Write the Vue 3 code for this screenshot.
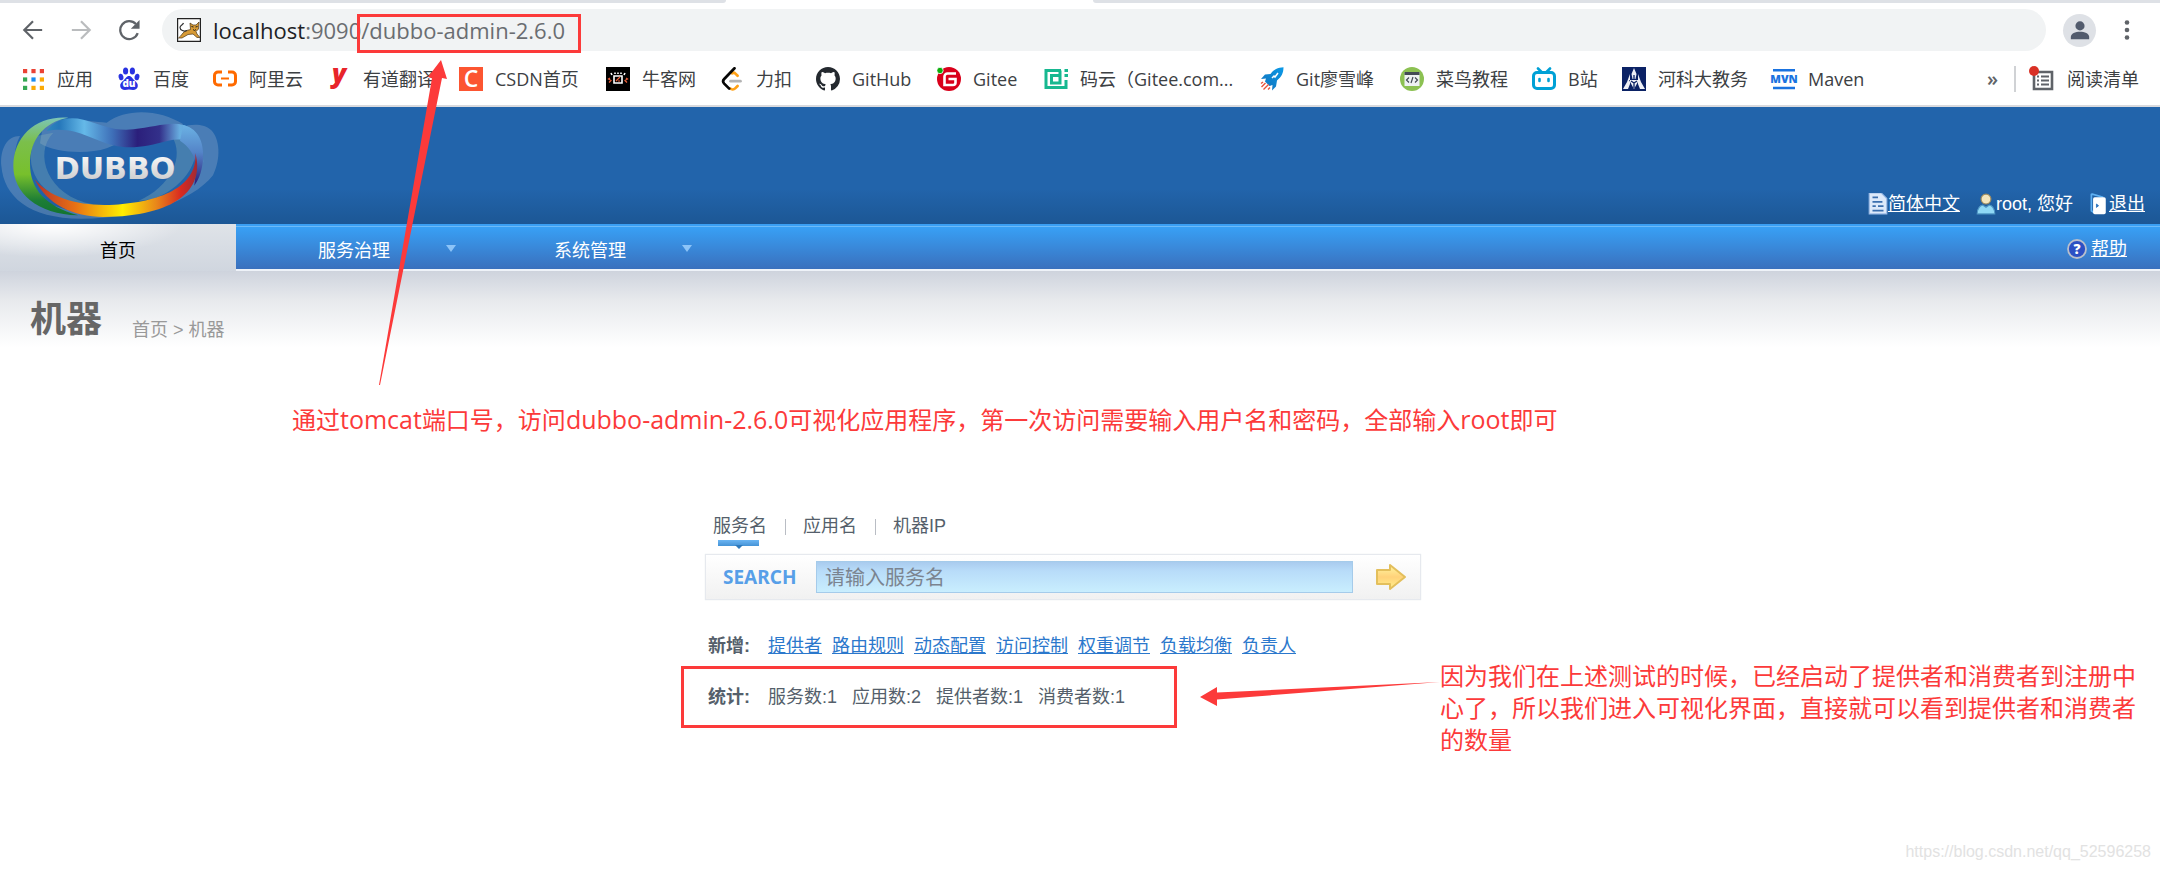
<template>
  <div class="page">
    <svg class="sprite" aria-hidden="true">
      <defs>
        <linearGradient id="rocket-blue" x1="0" y1="1" x2="1" y2="0">
          <stop offset="0" stop-color="#1470b8" />
          <stop offset="1" stop-color="#0b9ae8" />
        </linearGradient>
      </defs>
      <symbol id="i-baidu" viewBox="0 0 24 24">
        <g fill="#2932e1">
          <ellipse cx="8.6" cy="4" rx="2.6" ry="3.6" />
          <ellipse cx="15.4" cy="4" rx="2.6" ry="3.6" />
          <ellipse cx="4" cy="10" rx="2.400" ry="3.200" transform="rotate(-12 4 10)" />
          <ellipse cx="20" cy="10" rx="2.400" ry="3.200" transform="rotate(12 20 10)" />
          <path d="M12 9c-2.600 0-3.400 2.600-5.200 4.200-2.200 1.800-4 3.400-3.600 6 .4 2.600 2.600 3.800 4.800 3.700 1.400-.1 2.600-.4 4-.4s2.600.3 4 .4c2.200.1 4.400-1.100 4.800-3.700.4-2.600-1.400-4.200-3.600-6C15.400 11.600 14.600 9 12 9z" />
        </g>
      </symbol>
      <symbol id="i-aliyun" viewBox="0 0 24 24">
        <path d="M9 5H5a3.500 3.500 0 0 0-3.500 3.500v6A3.500 3.500 0 0 0 5 18h4M15 5h4a3.500 3.500 0 0 1 3.500 3.500v6A3.500 3.500 0 0 1 19 18h-4" fill="none" stroke="#ff6a00" stroke-width="3" />
        <path d="M8 11.500h8" stroke="#ff6a00" stroke-width="2" />
      </symbol>
      <symbol id="i-csdn" viewBox="0 0 24 24">
        <path d="M0 0h24v24H0z" fill="#fc5531" />
      </symbol>
      <symbol id="i-nowcoder" viewBox="0 0 24 24">
        <path d="M0 0h24v24H0z" fill="#000" />
        <path d="M8 9h8v7H8zM5 6l1 2M19 6l-1 2M9 7V5.500M12 7V5.500M15 7V5.500" fill="none" stroke="#fff" stroke-width="1.600" />
        <path d="M4 11l-1.500 1L5 13.500 3 15.500M20 11l1.500 1-2.500 1.500 2 2M10 14l4-4M12 14h2" fill="none" stroke="#f0603a" stroke-width="1.200" />
      </symbol>
      <symbol id="i-leetcode" viewBox="0 0 24 24">
        <g fill="none" stroke-width="2.700" stroke-linecap="round">
          <path d="M17.600 8.800l-2.200-2.200c-1-1-2.400-1-3.400-.3M17.600 19l-2.400 2.400c-1.400 1.400-3.600 1.400-5 0" stroke="#ffa116" />
          <path d="M14.500 1.300L4.200 12c-1.300 1.300-1.300 3.200 0 4.600l5 5" stroke="#070706" />
          <path d="M10.500 14.200h10" stroke="#b3b3b3" />
        </g>
      </symbol>
      <symbol id="i-github" viewBox="0 0 16 16">
        <path fill="#24292f" d="M8 0C3.580 0 0 3.580 0 8c0 3.540 2.290 6.530 5.470 7.590.4.070.55-.17.55-.38 0-.19-.01-.82-.01-1.490-2.010.37-2.530-.49-2.690-.94-.09-.23-.48-.94-.82-1.130-.28-.15-.68-.52-.01-.53.63-.01 1.080.58 1.230.82.72 1.210 1.870.87 2.330.66.07-.52.28-.87.51-1.070-1.780-.2-3.640-.89-3.640-3.950 0-.87.31-1.590.82-2.150-.08-.2-.36-1.020.08-2.120 0 0 .67-.21 2.200.82.64-.18 1.320-.27 2-.27s1.360.09 2 .27c1.530-1.040 2.200-.82 2.200-.82.44 1.100.16 1.920.08 2.120.51.56.82 1.270.82 2.150 0 3.070-1.870 3.750-3.650 3.950.29.25.54.73.54 1.480 0 1.070-.01 1.930-.01 2.200 0 .21.15.46.55.38A8.010 8.010 0 0 0 16 8c0-4.420-3.580-8-8-8z" />
      </symbol>
      <symbol id="i-gitee" viewBox="0 0 24 24">
        <circle cx="12" cy="12" r="12" fill="#d9001b" />
        <path d="M19 6.500h-8.500a3 3 0 0 0-3 3v8.500h8.500a2.500 2.500 0 0 0 2.500-2.500V12h-7" fill="none" stroke="#fff" stroke-width="2.600" />
        <circle cx="3" cy="3.500" r="3.200" fill="#0cae0c" stroke="#fff" stroke-width=".8" />
      </symbol>
      <symbol id="i-mayun" viewBox="0 0 24 24">
        <path d="M17 3.500H2v17h20V13M16 8.500H7.500v7.500H16V3.500" fill="none" stroke="#17b890" stroke-width="3" />
        <path d="M20.500 2H24v3h-3.500zM20.500 7H24v3h-3.500z" fill="#17b890" />
      </symbol>
      <symbol id="i-rocket" viewBox="0 0 24 24">
        <path d="M23.500.3C18 .5 13.500 2.500 10.500 7L5 7.500 1 12l5-.5-1 3 4.500 4.500 3-1L12 23.500l4-4 1-6C21.500 10 23.500 6 23.500.3z" fill="url(#rocket-blue)" />
        <path d="M12 11l2-2 1 1 3-4" fill="none" stroke="#fff" stroke-width="1.500" />
        <path d="M1.500 20l4-4M3.500 22.500l5-5M1 16.500l2-1.500M8 22.500l2-2" stroke="#e8523c" stroke-width="1.400" />
      </symbol>
      <symbol id="i-runoob" viewBox="0 0 24 24">
        <circle cx="12" cy="12" r="12" fill="#8cc152" />
        <path d="M4.500 5h15v14h-15z" fill="#eef1f3" />
        <path d="M4.500 5h15v3h-15z" fill="#434a54" />
        <path d="M9 10.500L6.500 13 9 15.500M15 10.500l2.500 2.500-2.500 2.500M13 10l-2 6" fill="none" stroke="#434a54" stroke-width="1.200" />
      </symbol>
      <symbol id="i-bili" viewBox="0 0 24 24">
        <rect x="1.500" y="5.500" width="21" height="16" rx="3.500" fill="none" stroke="#00a1d6" stroke-width="3" />
        <path d="M6 1.500l3.500 3.500M18 1.500L14.500 5" stroke="#00a1d6" stroke-width="2.600" stroke-linecap="round" />
        <path d="M7.500 12v2M16.500 12v2" stroke="#00a1d6" stroke-width="2.600" stroke-linecap="round" />
      </symbol>
      <symbol id="i-heke" viewBox="0 0 24 24">
        <path d="M0 0h24v24H0z" fill="#0b2265" />
        <path d="M12 1l2.500 6-1 5H10.500l-1-5zM8 7l-3 8-4 7h5l2-5zM16 7l3 8 4 7h-5l-2-5zM7 13h10l-5 9z" fill="#eef0f6" />
        <path d="M12 8v4M9 14l3 2 3-2M12 16v5" stroke="#0b2265" stroke-width="1.300" fill="none" />
      </symbol>
      <symbol id="i-maven" viewBox="0 0 24 24">
        <path d="M1 3.200h22M1 21h22" stroke="#1a73e0" stroke-width="2.600" />
      </symbol>
    </svg>

    <!-- browser chrome -->
    <header class="browser">
      <div class="tabstrip"><i class="left"></i><i class="right"></i></div>
      <div class="toolbar">
        <button class="icon-btn" aria-label="后退">
          <svg viewBox="0 0 24 24"><path d="M22 12H3M12 2.500L2.500 12l9.500 9.500" fill="none" stroke="#5f6368" stroke-width="2.400" /></svg>
        </button>
        <button class="icon-btn" aria-label="前进">
          <svg viewBox="0 0 24 24"><path d="M2 12h19M12 2.500l9.500 9.500-9.500 9.500" fill="none" stroke="#babcbe" stroke-width="2.400" /></svg>
        </button>
        <button class="icon-btn" aria-label="重新加载">
          <svg viewBox="0 0 24 24">
            <path d="M21.500 15.500A9.800 9.800 0 1 1 19.500 5.500" fill="none" stroke="#5f6368" stroke-width="2.500" />
            <path d="M23.500 1v9.500H14z" fill="#5f6368" />
          </svg>
        </button>
        <div class="omnibox">
          <svg class="favicon" viewBox="0 0 24 24">
            <path d="M.6.6h22.800v22.800H.6z" fill="#fff" stroke="#222" stroke-width="1.200" />
            <path d="M1.500 20c3-2 4-6 8-7.500l4-1L13 5l3 2h3l3-3-.5 7-2.500 2.500 1 2.500 3 3.500h-3l-4-3.500-5 .5L5 20z" fill="#d79a35" stroke="#4b3414" stroke-width=".7" />
            <path d="M14.500 8.500l2 .5M20.500 8.500l-2 .5M16 11.500l1.500 1 1.500-1" stroke="#222" fill="none" />
            <path d="M10 12.500C7 14 3 12 3 9.500S6 7 6.500 5" fill="none" stroke="#333" stroke-width="1.200" />
          </svg>
          <span class="url"><b>localhost</b>:9090<span class="path">/dubbo-admin-2.6.0</span></span>
        </div>
        <button class="avatar" aria-label="用户">
          <svg viewBox="0 0 24 24"><circle cx="12" cy="7.500" r="5" fill="#525b6d" /><path d="M2 22v-2.500C2 16 7 14 12 14s10 2 10 5.500V22z" fill="#525b6d" /></svg>
        </button>
        <button class="more" aria-label="菜单">
          <svg viewBox="0 0 6 20"><circle cx="3" cy="2.500" r="2.300" /><circle cx="3" cy="10" r="2.300" /><circle cx="3" cy="17.500" r="2.300" /></svg>
        </button>
      </div>
      <nav class="bookmarks">
        <a href="#" class="apps">
          <svg viewBox="0 0 20 20">
            <rect v-for="(c, i) in appColors" :key="i" :x="(i % 3) * 8" :y="Math.floor(i / 3) * 8" width="4" height="4" :fill="c" />
          </svg>
          应用
        </a>
        <a v-for="b in bookmarks" :key="b.icon" href="#">
          <svg viewBox="0 0 24 24">
            <use v-if="b.icon !== 'youdao'" :href="'#i-' + b.icon" width="24" height="24" />
            <text v-if="b.glyph" x="12" :y="b.y" :class="['ico-text', b.icon]">{{ b.glyph }}</text>
          </svg>
          <span :style="{ minWidth: b.width + 'px' }">{{ b.name }}</span>
        </a>
        <button class="overflow">»</button>
        <a href="#" class="reading">
          <svg viewBox="0 0 26 26">
            <path d="M5 6h18v17H5z" fill="none" stroke="#5f6368" stroke-width="2.600" />
            <path d="M8 10.500h2M8 14.500h2M8 18.500h2M12 10.500h8M12 14.500h8M12 18.500h8" stroke="#5f6368" stroke-width="2" />
            <circle cx="5" cy="5" r="5" fill="#d93025" />
          </svg>
          阅读清单
        </a>
      </nav>
    </header>

    <!-- dubbo admin -->
    <div class="banner">
      <svg class="logo" viewBox="0 3 690 351">
        <defs>
          <linearGradient id="ring-green" x1="0" y1="0" x2="0" y2="1">
            <stop offset="0" stop-color="#7cc5b8" />
            <stop offset=".25" stop-color="#7bbf4b" />
            <stop offset=".58" stop-color="#78c02c" />
            <stop offset=".85" stop-color="#1c7d35" />
            <stop offset="1" stop-color="#12742f" />
          </linearGradient>
          <linearGradient id="ring-blue" x1="0" y1="0" x2="1" y2="0">
            <stop offset="0" stop-color="#2f86bd" />
            <stop offset=".08" stop-color="#2577ba" />
            <stop offset=".24" stop-color="#65b9e8" />
            <stop offset=".42" stop-color="#3e6fb8" />
            <stop offset=".58" stop-color="#2b1f7b" />
            <stop offset=".72" stop-color="#33308a" />
            <stop offset=".85" stop-color="#68aee0" />
            <stop offset="1" stop-color="#5c9fd8" />
          </linearGradient>
          <linearGradient id="ring-side" x1="0" y1="0" x2="0" y2="1">
            <stop offset="0" stop-color="#6bb2e4" />
            <stop offset=".45" stop-color="#5484c8" />
            <stop offset="1" stop-color="#2a1a78" />
          </linearGradient>
          <linearGradient id="ring-fire" x1="0" y1="0" x2="1" y2="0">
            <stop offset="0" stop-color="#b5322a" />
            <stop offset=".25" stop-color="#e87114" />
            <stop offset=".54" stop-color="#ffee00" />
            <stop offset=".75" stop-color="#e8861a" />
            <stop offset=".9" stop-color="#d92a20" />
            <stop offset="1" stop-color="#a02a35" />
          </linearGradient>
          <linearGradient id="metal" x1="0" y1="0" x2="0" y2="1">
            <stop offset="0" stop-color="#fff" />
            <stop offset="1" stop-color="#c4c4c6" />
          </linearGradient>
        </defs>
        <g fill="#9fb3cc" fill-opacity=".32">
          <path d="M60 90C20 90 0 130 4 180c8 90 80 158 240 158 180 0 330-50 395-130 25-50 20-110-5-135-20-20-60-20-85-10 50 20 65 70 55 110-20 70-130 150-300 150C150 320 60 260 45 180c-5-40 5-70 15-90z" />
          <path d="M130 50c80-20 140-2 190 0 60-45 160-40 230 5l-50 30c-100 10-130 20-180 42-60 20-160 12-200-15z" />
          <path d="M160 80c-60 60-20 190 120 215l-30 5C120 280 60 180 110 90zM515 90c40 60 0 150-100 195l40-5c90-30 150-110 130-185z" fill="#8fb9b7" />
        </g>
        <path d="M205 35C110 28 40 90 40 180c0 80 70 145 195 148-100-28-145-80-145-155 0-70 40-125 115-138z" fill="url(#ring-green)" />
        <path d="M140 75c25-35 65-45 110-34 60 16 90 35 150 29 60-6 110-24 150-13 40 12 60 55 60 115-5-60-50-80-105-68-60 15-110 28-165 14-65-15-115-60-200-43z" fill="url(#ring-blue)" />
        <path d="M550 57c50 12 64 60 58 112-4 35-14 55-25 70 8-55 10-100-43-135z" fill="url(#ring-side)" />
        <path d="M104 220c50 60 140 82 240 76 130-8 250-50 242-155 30 110-60 190-276 192C220 333 140 295 104 220z" fill="url(#ring-fire)" />
        <text x="345" y="219" text-anchor="middle" class="logo-text" fill="url(#metal)">DUBBO</text>
      </svg>
      <div class="user-links">
        <a href="#">
          <svg viewBox="0 0 18 20">
            <path d="M1 0h11l5 5v14H1z" fill="#dce9fa" stroke="#9cbbe6" />
            <path d="M4 4h5M4 8h9M4 12h3M9 12h5M4 16h10" stroke="#3b6fae" stroke-width="1.600" />
          </svg><u>简体中文</u>
        </a>
        <span>
          <svg viewBox="0 0 18 20">
            <circle cx="9" cy="5.500" r="4.500" fill="#f3e5bd" stroke="#9b8a5f" />
            <path d="M1 19c0-5 3-8 5-8l3 2 3-2c2 0 5 3 5 8z" fill="#8fd8f5" stroke="#4f96c4" />
          </svg>root, 您好
        </span>
        <a href="#">
          <svg viewBox="0 0 20 26">
            <path d="M1 1l14 4M1 1v20l3 2" stroke="#5fb0f2" stroke-width="2" fill="none" />
            <rect x="3" y="5" width="15" height="20" rx="2" fill="#fff" />
            <path d="M7 13l2.500 2L7 17z" fill="#2b73bd" stroke="#2b73bd" />
          </svg><u>退出</u>
        </a>
      </div>
    </div>

    <nav class="menu">
      <a href="#" class="tab active">首页</a>
      <a v-for="m in menus" :key="m" href="#" class="tab">{{ m }}<i class="caret"></i></a>
      <a href="#" class="help">
        <svg viewBox="0 0 20 20">
          <circle cx="10" cy="10" r="9" fill="#2c50c4" stroke="#b9bfcc" stroke-width="1.800" />
          <text x="10" y="15" class="ico-text" font-size="14" fill="#fff">?</text>
        </svg>
        <u>帮助</u>
      </a>
    </nav>

    <main class="content">
      <div class="heading">
        <h1>机器</h1>
        <span class="crumb">首页 &gt; 机器</span>
      </div>

      <div class="panel">
        <div class="kinds">
          <a v-for="k in kinds" :key="k" href="#" :class="{ on: k === '服务名' }">{{ k }}</a>
        </div>
        <form class="search" @submit.prevent>
          <label for="keyword">SEARCH</label>
          <input id="keyword" v-model="keyword" type="text" placeholder="请输入服务名" />
          <button aria-label="搜索">
            <svg viewBox="0 0 30 26">
              <defs>
                <linearGradient id="go" x1="0" y1="0" x2="0" y2="1">
                  <stop offset="0" stop-color="#fff6a0" />
                  <stop offset=".5" stop-color="#ffd27a" />
                  <stop offset="1" stop-color="#fff08a" />
                </linearGradient>
              </defs>
              <path d="M1 6h13V1l15 12-15 12v-5H1z" fill="url(#go)" stroke="#e3bf5c" stroke-width="2" stroke-linejoin="round" />
            </svg>
          </button>
        </form>
        <div class="row adds">
          <strong>新增:</strong>
          <a v-for="a in adds" :key="a" href="#">{{ a }}</a>
        </div>
        <div class="row stats">
          <strong>统计:</strong>
          <span v-for="s in stats" :key="s.label">{{ s.label }}:{{ s.count }}</span>
          <svg class="stats-arrow" viewBox="0 0 240 28">
            <path d="M0 17L17 7v5.500L240 2 17 19.500V26z" />
          </svg>
          <p class="note stats-note">
            因为我们在上述测试的时候，已经启动了提供者和消费者到注册中心了，所以我们进入可视化界面，直接就可以看到提供者和消费者的数量
          </p>
        </div>
      </div>
    </main>

    <svg class="url-arrow" viewBox="0 0 72 326">
      <path d="M0 325L53 18l-4-1L62 0l6 19-5-1L1 325z" />
    </svg>
    <p class="note url-note">
      通过<span>tomcat</span>端口号，访问<span>dubbo-admin-2.6.0</span>可视化应用程序，第一次访问需要输入用户名和密码，全部输入<span>root</span>即可
    </p>
    <span class="watermark">https://blog.csdn.net/qq_52596258</span>
  </div>
</template>

<script setup>
import { ref } from "vue";

const keyword = ref("");

const appColors = [
  "#ea4335", "#ea4335", "#ea4335",
  "#34a853", "#1a8cf0", "#fbaa05",
  "#34a853", "#fbaa05", "#fbaa05",
];

const bookmarks = [
  { icon: "baidu", name: "百度", width: 36, glyph: "du", y: 20 },
  { icon: "aliyun", name: "阿里云", width: 54 },
  { icon: "youdao", name: "有道翻译", width: 72, glyph: "y", y: 16 },
  { icon: "csdn", name: "CSDN首页", width: 87, glyph: "C", y: 20 },
  { icon: "nowcoder", name: "牛客网", width: 54 },
  { icon: "leetcode", name: "力扣", width: 36 },
  { icon: "github", name: "GitHub", width: 61 },
  { icon: "gitee", name: "Gitee", width: 47 },
  { icon: "mayun", name: "码云（Gitee.com...", width: 156 },
  { icon: "rocket", name: "Git廖雪峰", width: 80 },
  { icon: "runoob", name: "菜鸟教程", width: 72 },
  { icon: "bili", name: "B站", width: 30 },
  { icon: "heke", name: "河科大教务", width: 90 },
  { icon: "maven", name: "Maven", width: 57, glyph: "MVN", y: 16 },
];

const menus = ["服务治理", "系统管理"];
const kinds = ["服务名", "应用名", "机器IP"];
const adds = ["提供者", "路由规则", "动态配置", "访问控制", "权重调节", "负载均衡", "负责人"];
const stats = [
  { label: "服务数", count: 1 },
  { label: "应用数", count: 2 },
  { label: "提供者数", count: 1 },
  { label: "消费者数", count: 1 },
];
</script>

<style>
body {
  margin: 0;
  background: #fff;
}
</style>

<style scoped>
.page {
  position: relative;
  min-height: 100vh;
  overflow: hidden;
  font-family: "Liberation Sans", "Noto Sans CJK SC", sans-serif;
  font-size: 18px;
  line-height: 24px;
}

.sprite {
  position: absolute;
  width: 0;
  height: 0;
}

a {
  color: inherit;
  text-decoration: none;
}

button {
  padding: 0;
  border: 0;
  background: none;
}

svg {
  display: block;
  flex: none;
}

.ico-text {
  font-family: "Open Sans", sans-serif;
  font-weight: 800;
  text-anchor: middle;
}

.ico-text.baidu {
  font-size: 10px;
  fill: #fff;
}

.ico-text.youdao {
  font-size: 26px;
  font-style: italic;
  fill: #e8242a;
}

.ico-text.csdn {
  font-size: 23px;
  font-weight: 600;
  fill: #fff;
}

.ico-text.maven {
  font-size: 11px;
  fill: #1a73e0;
}

/* browser chrome */
.browser {
  font-family: "Open Sans", "Noto Sans CJK SC", sans-serif;
  color: #3c4043;
  border-bottom: 2px solid #d9dade;
}

.tabstrip {
  display: flex;
  justify-content: space-between;
  height: 3px;
}

.tabstrip i {
  background: #dee1e6;
}

.tabstrip .left {
  width: 33.6%;
  border-bottom-right-radius: 6px;
}

.tabstrip .right {
  width: 49.4%;
  border-bottom-left-radius: 6px;
}

.toolbar {
  display: flex;
  align-items: center;
  padding: 6px 30px 0 22px;
}

.icon-btn {
  margin-right: 26px;
}

.icon-btn svg {
  width: 22px;
  height: 22px;
}

.omnibox {
  display: flex;
  flex: 1;
  align-items: center;
  gap: 12px;
  height: 42px;
  margin: 0 17px 0 -4px;
  padding-left: 15px;
  border-radius: 21px;
  background: #f1f3f4;
}

.favicon {
  width: 24px;
  height: 24px;
}

.url {
  font-size: 22px;
  color: #6a6d71;
}

.url b {
  font-weight: 400;
  color: #202124;
}

.path {
  position: relative;
}

.path::after {
  position: absolute;
  inset: -1px -16px -8px -4px;
  border: 3px solid #fc3a3a;
  content: "";
}

.avatar {
  display: grid;
  place-items: center;
  width: 33px;
  height: 33px;
  border-radius: 50%;
  background: #dee1e6;
}

.avatar svg {
  width: 22px;
  height: 22px;
}

.more {
  margin-left: 28px;
}

.more svg {
  width: 6px;
  height: 20px;
  fill: #5f6368;
}

.bookmarks {
  display: flex;
  align-items: center;
  gap: 24px;
  height: 52px;
  padding: 2px 21px 0 23px;
}

.bookmarks a {
  display: flex;
  align-items: center;
  gap: 12px;
  white-space: nowrap;
}

.bookmarks svg {
  width: 24px;
  height: 24px;
  overflow: visible;
}

.bookmarks .apps {
  gap: 13px;
}

.bookmarks .apps svg {
  width: 21px;
  height: 21px;
}

.overflow {
  margin-left: auto;
  margin-right: -8px;
  font: 600 20px/24px "Open Sans", sans-serif;
  color: #5f6368;
}

.bookmarks .reading {
  padding-left: 13px;
  border-left: 2px solid #d0d2d5;
}

.bookmarks .reading svg {
  width: 26px;
  height: 26px;
}

/* banner */
.banner {
  display: flex;
  align-items: flex-end;
  justify-content: space-between;
  height: 117px;
  background: linear-gradient(#2264ab 70%, #1c5795);
}

.logo {
  width: 230px;
  height: 117px;
}

.logo-text {
  font-family: "DejaVu Sans", sans-serif;
  font-size: 90px;
  font-weight: 700;
}

.user-links {
  display: flex;
  gap: 16px;
  padding: 0 15px 8px 0;
  color: #fff;
}

.user-links > * {
  display: flex;
  align-items: center;
}

.user-links svg {
  width: 20px;
  height: 22px;
}

/* menu */
.menu {
  display: flex;
  height: 45px;
  border-bottom: 2px solid #eef2f8;
  background: linear-gradient(#3a9ff3 2px, #6dbaf7 2px, #6dbaf7 3px, #38a0f5 3px, #3a70bd);
  color: #fff;
}

.tab {
  position: relative;
  width: 236px;
  line-height: 54px;
  text-align: center;
}

.tab.active {
  height: 47px;
  background: radial-gradient(ellipse at 22% 0, #fff, transparent 50%), linear-gradient(#dfe3e8, #d0d6df);
  color: #000;
}

.caret {
  position: absolute;
  top: 21px;
  right: 16px;
  border: 5px solid transparent;
  border-top: 7px solid #8cc4f8;
  border-bottom: 0;
}

.help {
  display: flex;
  align-items: center;
  gap: 4px;
  margin-left: auto;
  padding: 4px 33px 0 0;
}

.help svg {
  width: 20px;
  height: 20px;
}

/* content */
.content {
  padding-top: 25px;
  background: linear-gradient(#ced3dd, #e8eaed 30px, #fff 76px);
}

.heading {
  display: flex;
  align-items: flex-end;
  gap: 30px;
  padding-left: 30px;
}

h1 {
  margin: 0;
  font-size: 36px;
  line-height: 48px;
  color: #666;
}

.crumb {
  padding-bottom: 2px;
  color: #999;
}

.panel {
  position: relative;
  left: -17px;
  width: 716px;
  margin: 170px auto 0;
  color: #555f6b;
}

.kinds {
  display: flex;
  padding-left: 8px;
}

.kinds a {
  position: relative;
}

.kinds a + a {
  margin-left: 18px;
  padding-left: 18px;
}

.kinds a + a::before {
  position: absolute;
  top: 5px;
  left: 0;
  height: 16px;
  border-left: 1px solid #b9bdc4;
  content: "";
}

.kinds .on::before {
  position: absolute;
  top: 26px;
  left: 5px;
  width: 41px;
  height: 6px;
  background: linear-gradient(#6bb5f3, #4593d6);
  content: "";
}

.kinds .on::after {
  position: absolute;
  top: 31px;
  left: 22px;
  border: 4px solid transparent;
  border-top-color: #2f7abc;
  border-bottom: 0;
  content: "";
}

.search {
  display: flex;
  align-items: center;
  height: 44px;
  margin-top: 16px;
  border: 1px solid #e6e9ee;
  box-shadow: 0 0 1px #dfe3e8;
  background: linear-gradient(#fff, #f1f1f1);
}

.search label {
  width: 110px;
  box-sizing: border-box;
  padding-left: 17px;
  font: 700 19px/24px "Noto Sans", sans-serif;
  color: #579fe8;
}

.search input {
  flex: 1;
  box-sizing: border-box;
  height: 32px;
  padding: 2px 8px 0;
  border: 1px solid #a5cbea;
  background: linear-gradient(#a9cbee, #b8dcf9 30%, #c9eefe);
  font: 20px "Liberation Sans", "Noto Sans CJK SC", sans-serif;
  color: #555;
}

.search input::placeholder {
  color: #7b8490;
  opacity: 1;
}

.search button {
  padding: 0 14px 0 23px;
}

.search button svg {
  width: 30px;
  height: 26px;
}

.row {
  position: relative;
  display: flex;
  padding-left: 3px;
}

.row strong {
  margin-right: 8px;
}

.adds {
  gap: 10px;
  margin-top: 34px;
}

.adds a {
  color: #2b78cc;
  text-decoration: underline;
}

.stats {
  gap: 15px;
  margin-top: 27px;
}

.stats strong {
  margin-right: 3px;
}

.stats::before {
  position: absolute;
  top: -19px;
  left: -24px;
  width: 490px;
  height: 56px;
  border: 3px solid #fc3a3a;
  content: "";
}

/* annotations */
.note {
  position: absolute;
  margin: 0;
  font-family: "Open Sans", "Noto Sans CJK SC", sans-serif;
  font-size: 24px;
  line-height: 32px;
  color: #fc3a3a;
}

.url-note {
  top: 403px;
  left: 292px;
  white-space: nowrap;
}

.url-note span {
  font-size: 25px;
}

.stats-note {
  top: -25px;
  left: 735px;
  width: 700px;
}

.url-arrow,
.stats-arrow {
  position: absolute;
  fill: #fc3a3a;
}

.url-arrow {
  top: 60px;
  left: 379px;
  width: 72px;
  height: 326px;
}

.stats-arrow {
  top: -5px;
  left: 495px;
  width: 240px;
  height: 28px;
}

.watermark {
  position: absolute;
  right: 9px;
  bottom: 6px;
  font-size: 16px;
  color: #e2e2e2;
}
</style>
